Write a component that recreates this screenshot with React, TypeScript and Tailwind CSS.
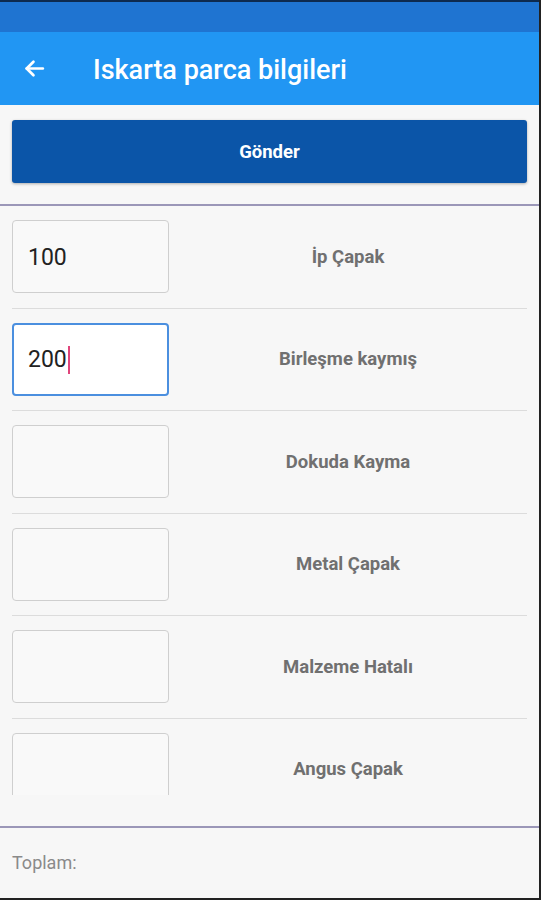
import React from "react";

const rows = [
  { value: "100", label: "İp Çapak", focused: false },
  { value: "200", label: "Birleşme kaymış", focused: true },
  { value: "", label: "Dokuda Kayma", focused: false },
  { value: "", label: "Metal Çapak", focused: false },
  { value: "", label: "Malzeme Hatalı", focused: false },
  { value: "", label: "Angus Çapak", focused: false },
];

export default function App() {
  return (
    <div
      className="w-[541px] h-[900px] flex flex-col bg-[#f7f7f7] border-r-2 border-b-2 border-[#222] overflow-hidden"
      style={{ fontFamily: "Roboto, 'Liberation Sans', sans-serif" }}
    >
      <div className="h-[32px] shrink-0 bg-[#1f74d1] border-t-2 border-[#0d2a4f]" />
      <div className="h-[73px] shrink-0 bg-[#2196f3] flex items-center">
        <div className="w-[93px] flex items-center pl-[22px]">
          <svg width="25" height="25" viewBox="0 0 24 24" fill="none" stroke="white" strokeWidth="2.6" strokeLinecap="round" strokeLinejoin="round">
            <path d="M20 12H4.5" />
            <path d="M11 5.5L4.5 12L11 18.5" />
          </svg>
        </div>
        <div className="text-white text-[27px] font-medium leading-none pt-[3px]">Iskarta parca bilgileri</div>
      </div>
      <div className="px-3 pt-[15px] pb-[21px] shrink-0">
        <div className="h-[63px] bg-[#0b55a8] rounded-[3px] shadow-[0_1px_3px_rgba(0,0,0,0.3)] flex items-center justify-center text-white font-bold text-[18.5px] pt-[2px]">
          Gönder
        </div>
      </div>
      <div className="h-[2px] shrink-0 bg-[#9b97b8]" />
      <div className="h-[589px] shrink-0 overflow-hidden">
        {rows.map((r, i) => (
          <div key={i} className="mx-3 py-[14.25px] border-b border-[#dcdcdc] flex items-center">
            <div
              className={
                r.focused
                  ? "w-[157px] h-[73px] rounded-[4px] border-2 border-[#4b8fdf] bg-white flex items-center pl-[14px] pt-[2px] text-[23px] text-[#222]"
                  : "w-[157px] h-[73px] rounded-[4px] border border-[#cfcfcf] bg-[#f9f9f9] flex items-center pl-[15px] pt-[2px] text-[23px] text-[#222]"
              }
            >
              {r.value}
              {r.focused && <span className="inline-block w-[2px] h-[28px] bg-[#e0457b] ml-[1px]" />}
            </div>
            <div className="flex-1 text-center font-bold text-[18.5px] text-[#707070] pt-[2px]">{r.label}</div>
          </div>
        ))}
      </div>
      <div className="h-[31px] shrink-0" />
      <div className="h-[2px] shrink-0 bg-[#9b97b8]" />
      <div className="flex-1 flex items-center px-3 text-[18px] text-[#8a8a8a] pb-[2px]">Toplam:</div>
    </div>
  );
}
